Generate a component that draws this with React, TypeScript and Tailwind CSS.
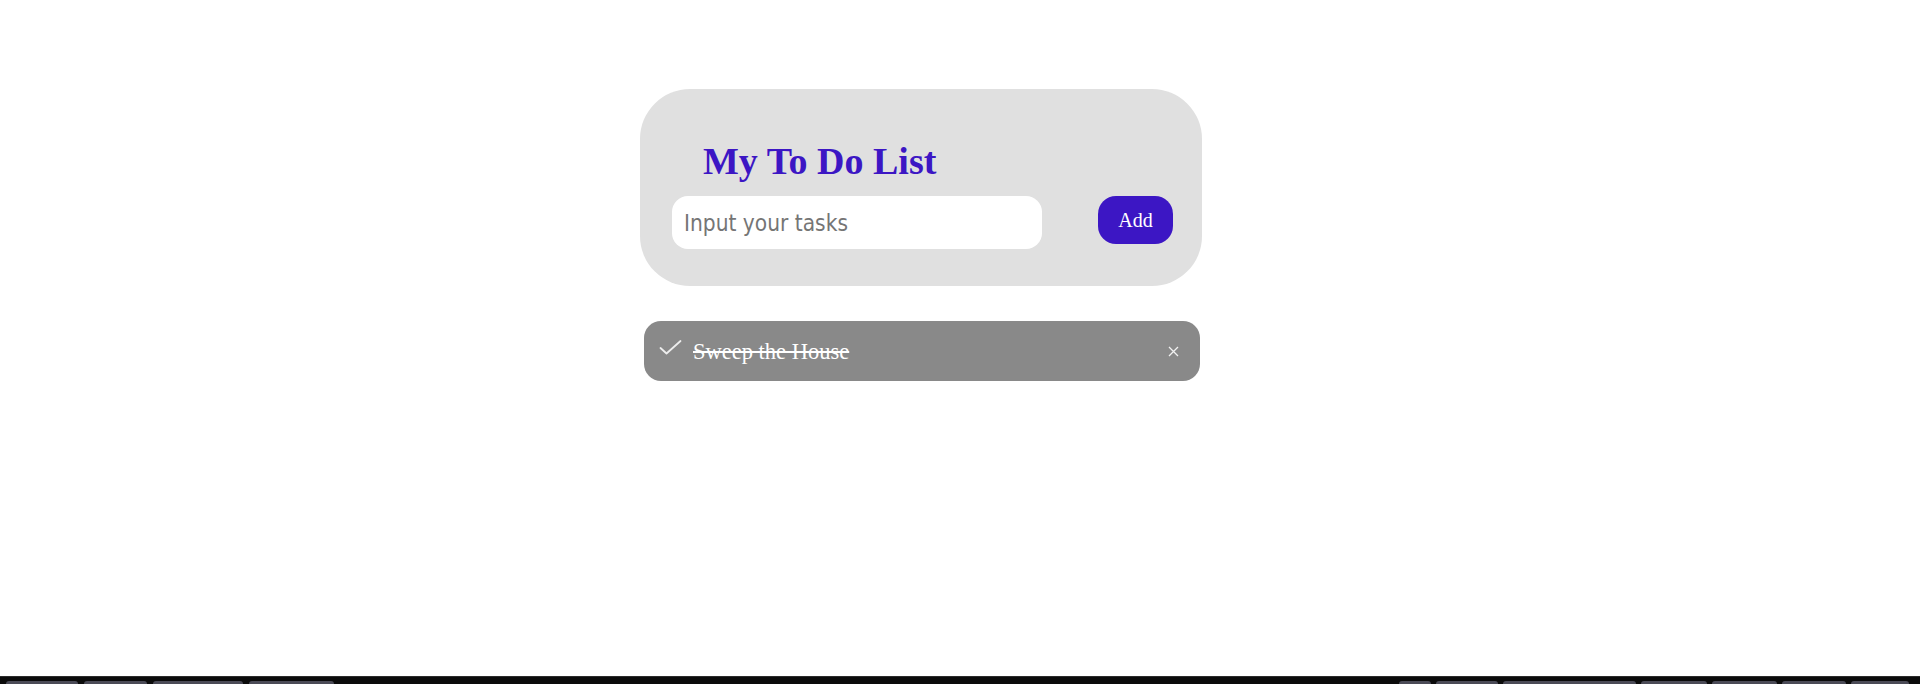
import { useState } from "react";

type Task = {
  id: number;
  text: string;
  done: boolean;
};

const leftTabs = [72, 63, 90, 85];
const rightTabs = [32, 62, 133, 66, 65, 64, 58];

function CheckIcon() {
  return (
    <svg width="23" height="15" viewBox="0 0 23 15" fill="none">
      <polyline
        points="1.5,8 7.5,13.5 21.5,1"
        stroke="#ededed"
        strokeWidth="1.8"
        strokeLinecap="round"
        strokeLinejoin="round"
      />
    </svg>
  );
}

function CloseIcon() {
  return (
    <svg width="11" height="11" viewBox="0 0 11 11" fill="none">
      <path d="M1 1L10 10M10 1L1 10" stroke="#f2f2f2" strokeWidth="1.3" />
    </svg>
  );
}

function TaskItem({
  task,
  onToggle,
  onRemove,
}: {
  task: Task;
  onToggle: (id: number) => void;
  onRemove: (id: number) => void;
}) {
  return (
    <li
      onClick={() => onToggle(task.id)}
      className="flex h-[60px] cursor-pointer items-center rounded-[17px] bg-[#898989] pl-[15px] pr-[21px]"
    >
      <span className="mb-[8px] mr-[11px] flex w-[23px] items-center">
        {task.done && <CheckIcon />}
      </span>
      <span
        className={`flex-1 pt-[2px] font-['Liberation_Serif',serif] text-[22.5px] text-white ${
          task.done ? "line-through" : ""
        }`}
      >
        {task.text}
      </span>
      <button
        onClick={(e) => {
          e.stopPropagation();
          onRemove(task.id);
        }}
        className="flex items-center"
      >
        <CloseIcon />
      </button>
    </li>
  );
}

export default function App() {
  const [input, setInput] = useState("");
  const [tasks, setTasks] = useState<Task[]>([
    { id: 1, text: "Sweep the House", done: true },
  ]);

  const handleAdd = () => {
    if (!input.trim()) return;
    setTasks([...tasks, { id: Date.now(), text: input, done: false }]);
    setInput("");
  };

  const handleToggle = (id: number) => {
    setTasks(tasks.map((t) => (t.id === id ? { ...t, done: !t.done } : t)));
  };

  const handleRemove = (id: number) => {
    setTasks(tasks.filter((t) => t.id !== id));
  };

  return (
    <div className="flex min-h-screen flex-col bg-white">
      <main className="ml-[640px] mt-[89px] w-[562px]">
        <div className="rounded-[50px] bg-[#e0e0e0] pb-[37px] pl-[32px] pr-[29px] pt-[52px]">
          <h1 className="pl-[31px] font-['Liberation_Serif',serif] text-[38px] font-bold leading-[40px] text-[#3c16c4]">
            My To Do List
          </h1>
          <div className="mt-[15px] flex items-start justify-between">
            <input
              value={input}
              onChange={(e) => setInput(e.target.value)}
              placeholder="Input your tasks"
              className="h-[53px] w-[370px] rounded-[16px] bg-white px-[12px] font-['DejaVu_Sans_Condensed','DejaVu_Sans',sans-serif] text-[22.5px] text-[#333] outline-none placeholder:text-[#757575]"
            />
            <button
              onClick={handleAdd}
              className="h-[48px] w-[75px] rounded-[18px] bg-[#3c16c4] font-['Liberation_Serif',serif] text-[20px] text-white"
            >
              Add
            </button>
          </div>
        </div>

        <ul className="ml-[4px] mr-[2px] mt-[35px] space-y-3">
          {tasks.map((task) => (
            <TaskItem
              key={task.id}
              task={task}
              onToggle={handleToggle}
              onRemove={handleRemove}
            />
          ))}
        </ul>
      </main>

      <footer className="mt-auto flex h-[8px] items-end justify-between border-t border-[#2b2b2b] bg-[#0b0b0b] pl-[6px] pr-[11px]">
        <div className="flex gap-[6px]">
          {leftTabs.map((w, i) => (
            <div
              key={i}
              className="h-[3px] rounded-t-[3px] bg-[#4b4b57]"
              style={{ width: w }}
            />
          ))}
        </div>
        <div className="flex gap-[5px]">
          {rightTabs.map((w, i) => (
            <div
              key={i}
              className="h-[3px] rounded-t-[3px] bg-[#4b4b57]"
              style={{ width: w }}
            />
          ))}
        </div>
      </footer>
    </div>
  );
}
